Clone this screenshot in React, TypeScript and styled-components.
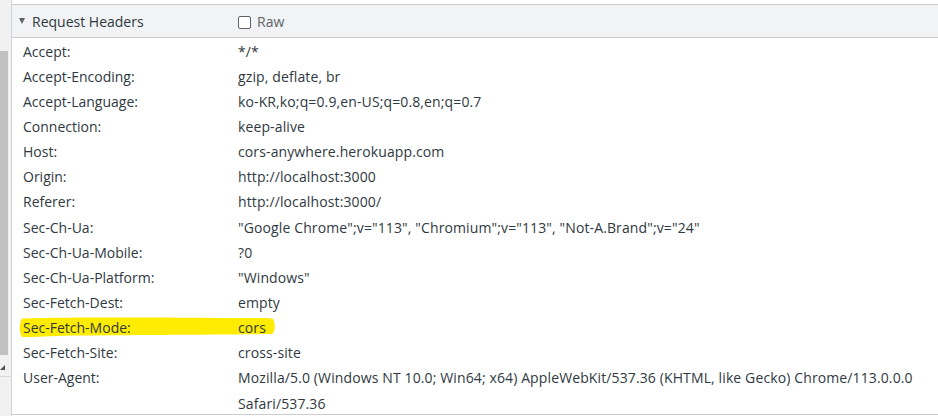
import React from "react";
import styled, { createGlobalStyle } from "styled-components";

const GlobalStyle = createGlobalStyle`
  html, body { margin: 0; padding: 0; background: #ffffff; }
  body { font-family: "Open Sans", "Noto Sans", "Liberation Sans", sans-serif; }
`;

const Page = styled.div`
  display: flex;
  width: 938px;
  height: 416px;
  overflow: hidden;
  background: #ffffff;
`;

const ScrollStrip = styled.div`
  width: 11px;
  flex: none;
  background: #f1f1f1;
  border-right: 1px solid #d3d3d3;
  display: flex;
  flex-direction: column;
`;

const Thumb = styled.div`
  margin-top: 51px;
  width: 8px;
  height: 304px;
  background: #c1c1c1;
`;

const DownArrow = styled.div`
  margin-top: 10px;
  width: 0;
  height: 0;
  border-left: 5px solid transparent;
  border-bottom: 5px solid #505050;
`;

const StripLine = styled.div`
  margin-top: 6px;
  width: 11px;
  border-top: 1px solid #dadada;
`;

const Panel = styled.div`
  flex: 1;
  margin-top: 4px;
  height: 409px;
  border-top: 1px solid #cbcdd1;
  border-bottom: 1px solid #cbcdd1;
  display: flex;
  flex-direction: column;
  color: #303942;
  font-size: 14px;
`;

const Header = styled.div`
  height: 32px;
  flex: none;
  background: #f1f3f4;
  border-bottom: 1px solid #cbcdd1;
  display: grid;
  grid-template-columns: 226px 1fr;
  align-items: center;
`;

const Title = styled.div`
  display: flex;
  align-items: center;
  padding-left: 7px;
  gap: 7px;
`;

const Caret = styled.span`
  width: 0;
  height: 0;
  border-left: 3.5px solid transparent;
  border-right: 3.5px solid transparent;
  border-top: 6px solid #5f6368;
`;

const RawLabel = styled.label`
  display: flex;
  align-items: center;
  gap: 6px;
  color: #5f6368;
`;

const CheckBox = styled.span`
  width: 11px;
  height: 11px;
  border: 1px solid #5f6368;
  border-radius: 2px;
  background: #ffffff;
  margin-top: 2px;
`;

const Rows = styled.div`
  padding-top: 0.5px;
  display: flex;
  flex-direction: column;
`;

const Row = styled.div`
  position: relative;
  display: grid;
  grid-template-columns: 226px 1fr;
  height: 25.15px;
  align-items: center;
`;

const Key = styled.span`
  position: relative;
  z-index: 1;
  padding-left: 11px;
  white-space: nowrap;
`;

const Value = styled.span`
  position: relative;
  z-index: 1;
  white-space: nowrap;
  letter-spacing: 0.12px;
`;

const Highlight = styled.svg`
  position: absolute;
  left: 0;
  top: 0;
  width: 280px;
  height: 25px;
  z-index: 0;
  pointer-events: none;
`;

const rows: [string, string, boolean?][] = [
  ["Accept:", "*/*"],
  ["Accept-Encoding:", "gzip, deflate, br"],
  ["Accept-Language:", "ko-KR,ko;q=0.9,en-US;q=0.8,en;q=0.7"],
  ["Connection:", "keep-alive"],
  ["Host:", "cors-anywhere.herokuapp.com"],
  ["Origin:", "http://localhost:3000"],
  ["Referer:", "http://localhost:3000/"],
  ["Sec-Ch-Ua:", "\"Google Chrome\";v=\"113\", \"Chromium\";v=\"113\", \"Not-A.Brand\";v=\"24\""],
  ["Sec-Ch-Ua-Mobile:", "?0"],
  ["Sec-Ch-Ua-Platform:", "\"Windows\""],
  ["Sec-Fetch-Dest:", "empty"],
  ["Sec-Fetch-Mode:", "cors", true],
  ["Sec-Fetch-Site:", "cross-site"],
  ["User-Agent:", "Mozilla/5.0 (Windows NT 10.0; Win64; x64) AppleWebKit/537.36 (KHTML, like Gecko) Chrome/113.0.0.0"],
  ["", "Safari/537.36"],
];

export default function App() {
  return (
    <>
      <GlobalStyle />
      <Page>
        <ScrollStrip>
          <Thumb />
          <DownArrow />
          <StripLine />
        </ScrollStrip>
        <Panel>
          <Header>
            <Title>
              <Caret />
              <span>Request Headers</span>
            </Title>
            <RawLabel>
              <CheckBox />
              <span>Raw</span>
            </RawLabel>
          </Header>
          <Rows>
            {rows.map(([k, v, hl], i) => (
              <Row key={i}>
                {hl && (
                  <Highlight viewBox="0 0 280 25">
                    <path
                      d="M10 3.5 C 60 2, 150 2.5, 220 3 C 245 3, 258 2.5, 261 4 C 263.5 8, 263.5 16, 260 19 C 200 19.5, 120 20, 60 20.5 C 35 21, 16 22.5, 10 22 C 7 18, 7 8, 10 3.5 Z"
                      fill="#ffec00"
                    />
                  </Highlight>
                )}
                <Key>{k}</Key>
                <Value>{v}</Value>
              </Row>
            ))}
          </Rows>
        </Panel>
      </Page>
    </>
  );
}
